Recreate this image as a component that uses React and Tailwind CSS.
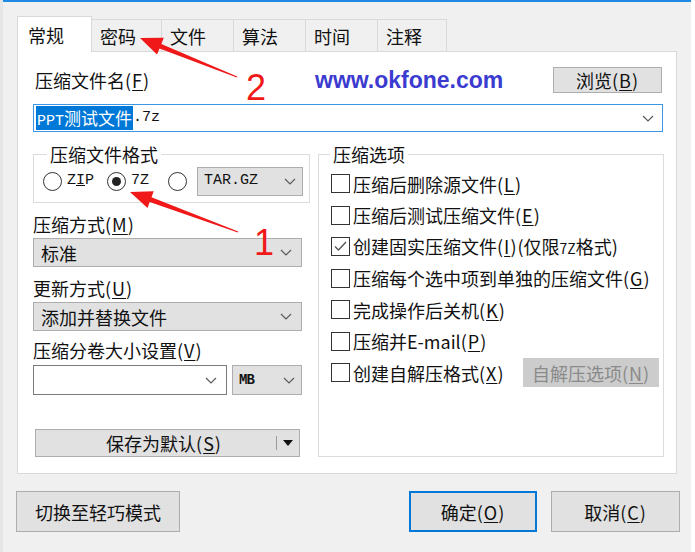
import { memo } from 'react'

const cjk = "[font-family:'Noto_Sans_CJK_SC',sans-serif]"

function Chevron({ className = '' }) {
  return (
    <svg width="12" height="7" viewBox="0 0 12 7" className={className}>
      <polyline points="1,1 6,6 11,1" fill="none" stroke="#5a5a5a" strokeWidth="1.2" />
    </svg>
  )
}

function Mono({ children, className = 'text-[15px]' }) {
  return <span className={`[font-family:'Liberation_Mono',monospace] leading-[10px] ${className}`}>{children}</span>
}

function Key({ k }) {
  return (
    <span className="tracking-[1px]">
      (<span className="underline underline-offset-2">{k}</span>)
    </span>
  )
}

function Select({ children, className = '', white = false }) {
  return (
    <div
      className={`flex items-center justify-between border px-[7px] ${
        white ? 'bg-white border-[#7a7a7a]' : 'bg-[#e1e1e1] border-[#adadad]'
      } ${className}`}
    >
      <span className="text-[18px] leading-5 text-[#111]">{children}</span>
      <Chevron className="mr-[2px]" />
    </div>
  )
}

function Radio({ checked }) {
  return (
    <span className="flex h-[19px] w-[19px] items-center justify-center rounded-full border border-[#333] bg-white">
      {checked && <span className="h-[9px] w-[9px] rounded-full bg-[#222]" />}
    </span>
  )
}

function Check({ checked, label }) {
  return (
    <div className="flex h-[31.5px] items-center gap-[3px]">
      <span className="flex h-[19px] w-[19px] shrink-0 items-center justify-center border border-[#333] bg-white">
        {checked && (
          <svg width="13" height="11" viewBox="0 0 13 11">
            <polyline points="1,5.5 4.5,9 12,1" fill="none" stroke="#555" strokeWidth="1.3" />
          </svg>
        )}
      </span>
      <span className="whitespace-nowrap text-[18px] leading-5">{label}</span>
    </div>
  )
}

function Btn({ children, className = '', primary = false }) {
  return (
    <button
      className={`flex items-center justify-center bg-[#e1e1e1] text-[18px] leading-5 text-[#111] ${
        primary ? 'border-2 border-[#0078d7]' : 'border border-[#adadad]'
      } ${className}`}
    >
      {children}
    </button>
  )
}

const tabs = [
  ['常规', 'w-[75px]'],
  ['密码', 'w-[70px]'],
  ['文件', 'w-[72px]'],
  ['算法', 'w-[72px]'],
  ['时间', 'w-[72px]'],
  ['注释', 'w-[69px]'],
]

const Arrows = memo(function Arrows() {
  return (
    <svg className="pointer-events-none absolute left-0 top-0" width="695" height="552">
      <polygon
        fill="#f01818"
        points="140,38 163.8,37.8 161.3,43.9 237.2,76.5 236.8,77.5 159.5,48.5 157,54.6"
      />
      <polygon
        fill="#f01818"
        points="130,192 153.7,191.2 151.5,197.2 238.2,231.5 237.8,232.5 149.7,201.9 147.5,208"
      />
    </svg>
  )
})

export default function App() {
  return (
    <div className={`relative flex h-[552px] w-[695px] overflow-hidden bg-white text-[#111] ${cjk}`}>
      {/* background app edge */}
      <div className="w-[3px] bg-[#e6e6e6]" />

      {/* Dialog */}
      <div className="flex w-[688px] flex-col border-t-2 border-[#1e88e5] bg-[#f0f0f0]">
        {/* Tabs */}
        <div className="ml-[14px] mt-[14px] flex h-[35px] items-end">
          {tabs.map(([t, w], i) =>
            i === 0 ? (
              <div
                key={t}
                className={`${w} relative z-10 -mb-px flex h-[36px] items-center border border-b-0 border-[#d9d9d9] bg-white pl-[10px] text-[18px] leading-5`}
              >
                {t}
              </div>
            ) : (
              <div
                key={t}
                className={`${w} flex h-[32px] items-center border border-b-0 border-l-0 border-[#d9d9d9] bg-[#f0f0f0] pl-[8px] text-[18px] leading-5`}
              >
                {t}
              </div>
            )
          )}
        </div>

        {/* Panel */}
        <div className="mx-[14px] h-[423px] w-[660px] border border-[#d9d9d9] bg-white">
          <div className="mt-[15px] flex h-[26px] items-center pr-[14px]">
            <span className="w-[297px] pl-[17px] text-[18px] leading-5">
              压缩文件名<Key k="F" />
            </span>
            <span className="[font-family:'Liberation_Sans',sans-serif] text-[23px] font-bold leading-none text-[#3b3bd0]">
              www.okfone.com
            </span>
            <Btn className="ml-auto h-[26px] w-[109px]">
              浏览<Key k="B" />
            </Btn>
          </div>

          {/* File name combobox */}
          <div className="ml-[15px] mt-[11px] flex h-[28px] w-[630px] items-center justify-between border border-[#3d95e6] bg-white pl-[2px] pr-[8px]">
            <span className="flex items-center text-[17px] leading-5">
              <span className="bg-[#0078d7] px-[1px] leading-6 text-white">
                <Mono>PPT</Mono>测试文件
              </span>
              <Mono>.7z</Mono>
            </span>
            <Chevron />
          </div>

          <div className="ml-[15px] mt-[13px] flex gap-[8px]">
            {/* Left column */}
            <div className="flex w-[277px] flex-col">
              <fieldset className="h-[58px] border border-[#dcdcdc] pl-[9px]">
                <legend className="ml-[4px] px-[3px] text-[18px] leading-[18px]">压缩文件格式</legend>
                <div className="mt-[4px] flex h-[29px] items-center">
                  <Radio />
                  <span className="ml-[5px] w-[40px] [font-family:'Liberation_Mono',monospace] text-[15px]">
                    Z<span className="underline">I</span>P
                  </span>
                  <Radio checked />
                  <span className="ml-[5px] w-[37px] [font-family:'Liberation_Mono',monospace] text-[15px]">7Z</span>
                  <Radio />
                  <div className="ml-[10px] flex h-[29px] w-[106px] items-center justify-between border border-[#adadad] bg-[#e1e1e1] px-[6px]">
                    <span className="[font-family:'Liberation_Mono',monospace] text-[15px]">TAR.GZ</span>
                    <Chevron />
                  </div>
                </div>
              </fieldset>

              <div className="mt-[11px] h-5 text-[18px] leading-5">
                压缩方式<Key k="M" />
              </div>
              <Select className="mt-[4px] h-[29px] w-[269px]">标准</Select>

              <div className="mt-[11px] h-5 text-[18px] leading-5">
                更新方式<Key k="U" />
              </div>
              <Select className="mt-[4px] h-[29px] w-[269px]">添加并替换文件</Select>

              <div className="mt-[9px] h-5 text-[18px] leading-5">
                压缩分卷大小设置<Key k="V" />
              </div>
              <div className="mt-[5px] flex gap-[5px]">
                <Select white className="h-[30px] w-[194px]" />
                <div className="flex h-[30px] w-[70px] items-center justify-between border border-[#adadad] bg-[#e1e1e1] px-[6px]">
                  <span className="[font-family:'Liberation_Mono',monospace] text-[14px] font-bold tracking-[-1px]">MB</span>
                  <Chevron />
                </div>
              </div>

              <Btn className="ml-[2px] mt-[34px] h-[28px] w-[265px]">
                <span className="ml-auto pl-[16px]">
                  保存为默认<Key k="S" />
                </span>
                <span className="ml-auto mr-[6px] flex items-center gap-[6px]">
                  <span className="h-[14px] w-px bg-[#9a9a9a]" />
                  <svg width="10" height="6" viewBox="0 0 10 6">
                    <polygon points="0,0 10,0 5,6" fill="#111" />
                  </svg>
                </span>
              </Btn>
            </div>

            {/* Right column */}
            <fieldset className="h-[312px] w-[346px] border border-[#dcdcdc] pl-[12px] pr-[4px]">
              <legend className="ml-[-1px] px-[3px] text-[18px] leading-[18px]">压缩选项</legend>
              <div className="mt-[5px] flex flex-col">
                <Check label={<>压缩后删除源文件<Key k="L" /></>} />
                <Check label={<>压缩后测试压缩文件<Key k="E" /></>} />
                <Check
                  checked
                  label={
                    <>
                      创建固实压缩文件<Key k="I" />(仅限<span className="text-[14px]">7Z</span>格式)
                    </>
                  }
                />
                <Check label={<>压缩每个选中项到单独的压缩文件<Key k="G" /></>} />
                <Check label={<>完成操作后关机<Key k="K" /></>} />
                <Check label={<>压缩并E-mail<Key k="P" /></>} />
                <div className="flex items-center">
                  <Check label={<>创建自解压格式<Key k="X" /></>} />
                  <div className="ml-auto flex h-[29px] w-[136px] items-center justify-center border border-[#cccccc] bg-[#cccccc] text-[18px] leading-5 text-[#8a8a8a]">
                    自解压选项<Key k="N" />
                  </div>
                </div>
              </div>
            </fieldset>
          </div>
        </div>

        {/* Footer */}
        <div className="ml-[13px] mr-[11px] mt-[17px] flex gap-[14px]">
          <Btn className="h-[41px] w-[164px]">切换至轻巧模式</Btn>
          <Btn primary className="ml-auto h-[41px] w-[128px]">
            确定<Key k="O" />
          </Btn>
          <Btn className="h-[41px] w-[129px]">
            取消<Key k="C" />
          </Btn>
        </div>
      </div>

      <div className="flex-1 bg-white" />

      {/* Annotations */}
      <Arrows />
      <span className="absolute left-[246px] top-[70px] [font-family:'Liberation_Sans',sans-serif] text-[36px] leading-none text-[#f01818]">
        2
      </span>
      <span className="absolute left-[254px] top-[225px] [font-family:'Liberation_Sans',sans-serif] text-[36px] leading-none text-[#f01818]">
        1
      </span>
    </div>
  )
}
